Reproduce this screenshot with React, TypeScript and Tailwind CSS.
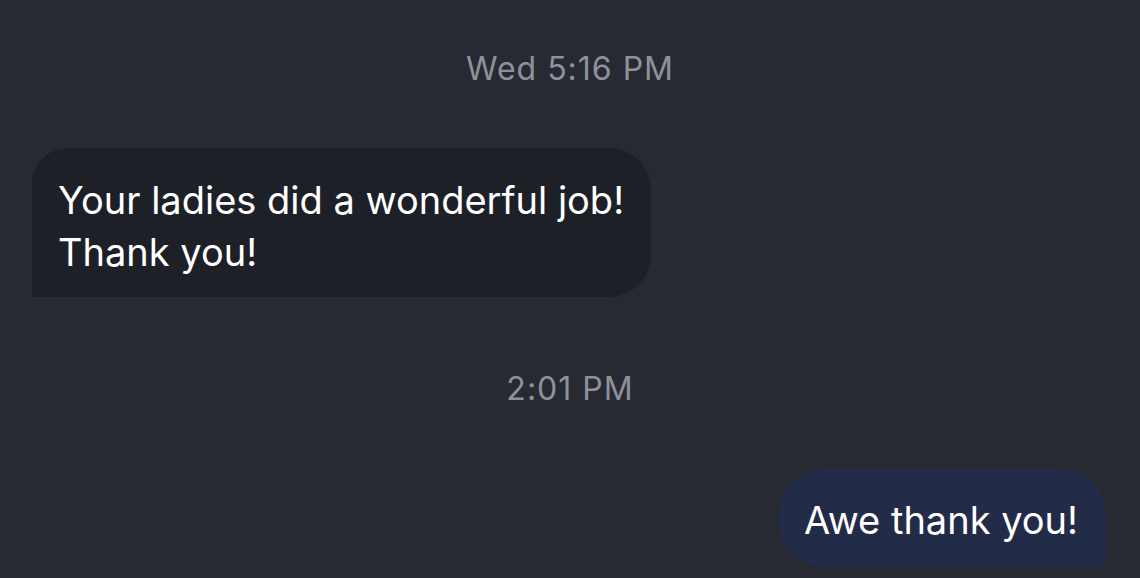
import React from "react";

export default function App() {
  return (
    <div
      className="w-[1140px] h-[578px] overflow-hidden bg-[#272a33] flex flex-col"
      style={{ fontFamily: "Inter, 'Noto Sans', sans-serif" }}
    >
      <div className="pt-[51px] text-center text-[32px] leading-[36px] tracking-[1px] text-[#8f919a]">
        Wed 5:16 PM
      </div>
      <div className="mt-[61px] pl-[32px] flex">
        <div className="bg-[#1e2027] text-white text-[38px] leading-[52px] pl-[26px] pr-[27px] pt-[26px] pb-[19px] rounded-tl-[36px] rounded-tr-[42px] rounded-br-[42px] rounded-bl-none">
          Your ladies did a wonderful job!
          <br />
          Thank you!
        </div>
      </div>
      <div className="mt-[74px] text-center text-[32px] leading-[36px] tracking-[1px] text-[#8f919a]">
        2:01 PM
      </div>
      <div className="mt-[62px] pr-[34px] flex justify-end">
        <div className="bg-[#222c48] text-white text-[38px] leading-[52px] pl-[25px] pr-[28px] pt-[25px] pb-[21px] rounded-tl-[46px] rounded-tr-[46px] rounded-bl-[46px] rounded-br-none">
          Awe thank you!
        </div>
      </div>
    </div>
  );
}
